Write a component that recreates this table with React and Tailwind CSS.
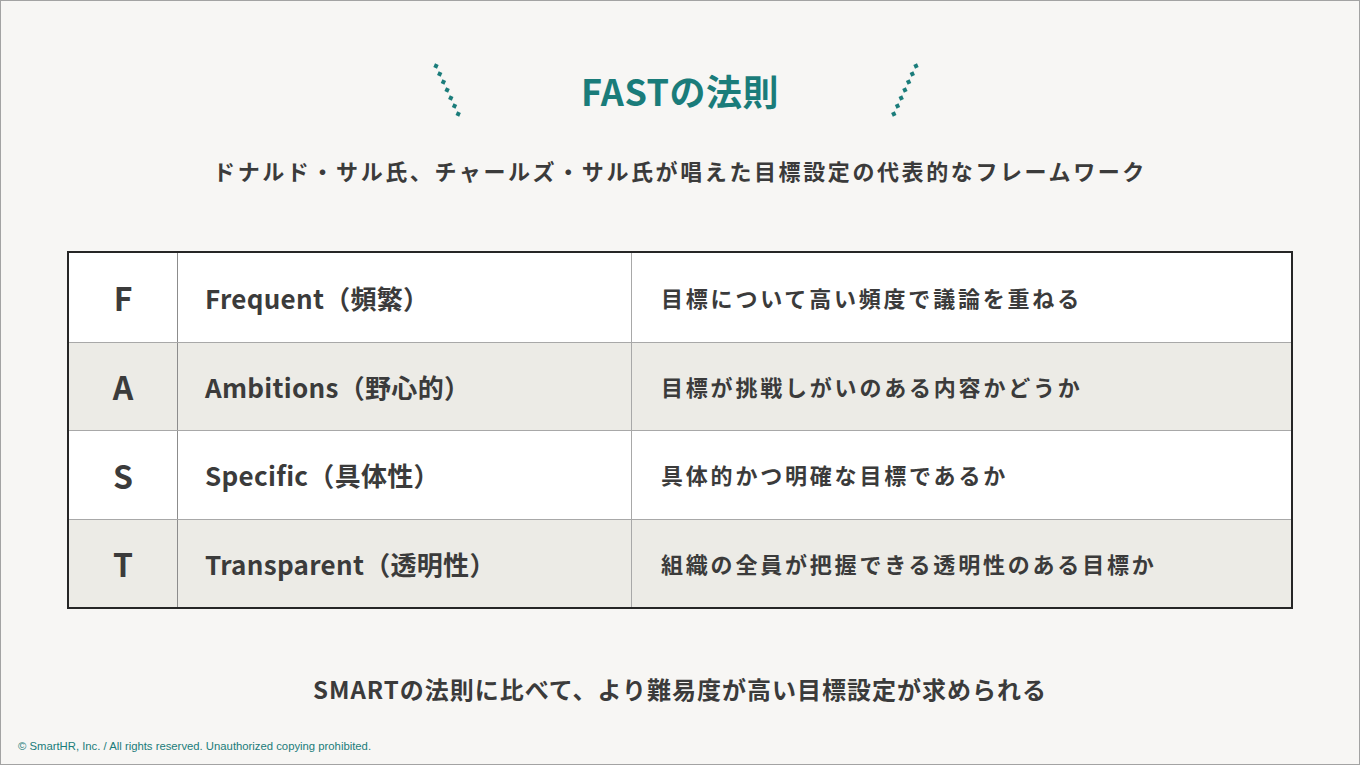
import React from "react";

const JP = { fontFamily: '"Noto Sans CJK JP", "Noto Sans", sans-serif' };

function Dots({ flip }) {
  const pts = Array.from({ length: 7 }, (_, i) => [4 + 3.7 * i, 4 + 8 * i]);
  return (
    <svg width="32" height="56" viewBox="0 0 32 56" style={flip ? { transform: "scaleX(-1)" } : undefined}>
      {pts.map(([x, y], i) => (
        <rect key={i} x={x - 2} y={y - 2} width="4" height="4" fill="#1a7c7a" transform={`rotate(25 ${x} ${y})`} />
      ))}
    </svg>
  );
}

const rows = [
  { k: "F", name: "Frequent（頻繁）", desc: "目標について高い頻度で議論を重ねる", shade: false },
  { k: "A", name: "Ambitions（野心的）", desc: "目標が挑戦しがいのある内容かどうか", shade: true },
  { k: "S", name: "Specific（具体性）", desc: "具体的かつ明確な目標であるか", shade: false },
  { k: "T", name: "Transparent（透明性）", desc: "組織の全員が把握できる透明性のある目標か", shade: true },
];

export default function App() {
  return (
    <div className="w-[1360px] h-[765px] bg-[#f7f6f4] border border-[#a3a3a3] flex flex-col items-center text-[#3b3b3b]" style={JP}>
      <div className="pt-[62px] pr-[8px] flex items-center h-[116px]">
        <Dots />
        <div className="ml-[117px] mr-[109px] text-[36px] leading-[52px] font-bold text-[#1a7c7a] tracking-[0.5px]">FASTの法則</div>
        <Dots flip />
      </div>
      <div className="mt-[38px] text-[22px] leading-[30px] font-bold tracking-[2.6px]">
        ドナルド・サル氏、チャールズ・サル氏が唱えた目標設定の代表的なフレームワーク
      </div>
      <div className="mt-[66px] w-[1226px] border-2 border-[#262626] flex flex-col">
        {rows.map((r, i) => (
          <div
            key={r.k}
            className={`flex h-[88.5px] ${i > 0 ? "border-t border-[#a8a8a8]" : ""} ${r.shade ? "bg-[#ecebe6]" : "bg-white"}`}
          >
            <div className="w-[109px] border-r border-[#8c8c8c] flex items-center justify-center text-[32px] font-bold">
              {r.k}
            </div>
            <div className="w-[454px] border-r border-[#a8a8a8] flex items-center pl-[27px] text-[26px] font-bold tracking-[0.3px]">
              {r.name}
            </div>
            <div className="flex-1 flex items-center pl-[29px] text-[22px] font-bold tracking-[2.8px]">
              {r.desc}
            </div>
          </div>
        ))}
      </div>
      <div className="mt-[64px] text-[24px] leading-[32px] font-bold tracking-[1px]">
        SMARTの法則に比べて、より難易度が高い目標設定が求められる
      </div>
      <div
        className="mt-[34px] self-start ml-[17px] text-[11.3px] leading-[14px] text-[#1a7c7a]"
        style={{ fontFamily: '"Liberation Sans", Arial, sans-serif' }}
      >
        © SmartHR, Inc. / All rights reserved. Unauthorized copying prohibited.
      </div>
    </div>
  );
}
